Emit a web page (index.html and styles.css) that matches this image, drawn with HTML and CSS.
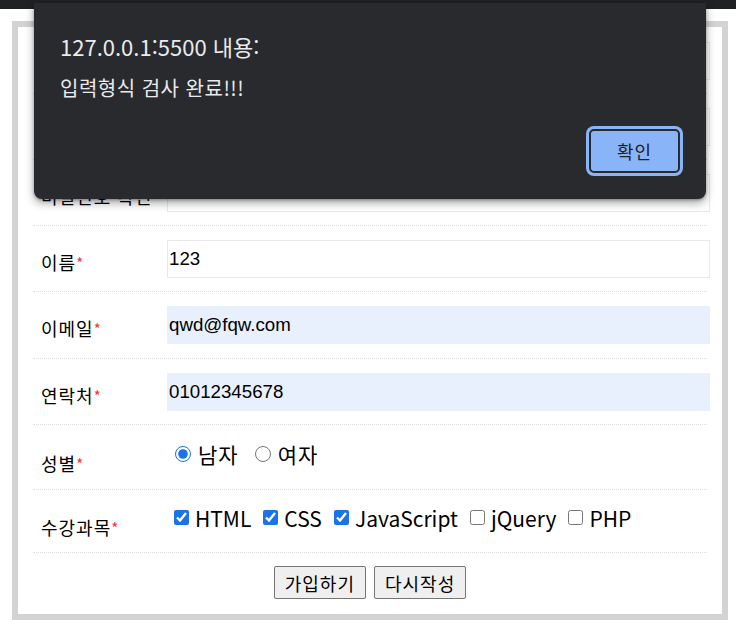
FILE: index.html
```html
<!DOCTYPE html>
<html lang="ko">
<head>
<meta charset="utf-8">
<title>회원가입</title>
<link rel="stylesheet" href="styles.css">
</head>
<body>
<div class="chrome"></div>
<div class="page">
  <form class="box">
    <div class="row field">
      <div class="lbl">아이디<span class="req">*</span></div>
      <input class="inp" type="text" value="">
    </div>
    <div class="row field">
      <div class="lbl">비밀번호<span class="req">*</span></div>
      <input class="inp" type="password" value="">
    </div>
    <div class="row field">
      <div class="lbl">비밀번호 확인</div>
      <input class="inp" type="password" value="">
    </div>
    <div class="row field">
      <div class="lbl">이름<span class="req">*</span></div>
      <input class="inp" type="text" value="123">
    </div>
    <div class="row field">
      <div class="lbl">이메일<span class="req">*</span></div>
      <input class="inp auto" type="text" value="qwd@fqw.com">
    </div>
    <div class="row field">
      <div class="lbl">연락처<span class="req">*</span></div>
      <input class="inp auto" type="text" value="01012345678">
    </div>
    <div class="row radios">
      <div class="lbl">성별<span class="req">*</span></div>
      <div class="opts">
        <label class="opt"><input type="radio" name="g" checked>남자</label>
        <label class="opt"><input type="radio" name="g">여자</label>
      </div>
    </div>
    <div class="row checks">
      <div class="lbl">수강과목<span class="req">*</span></div>
      <div class="opts">
        <label class="opt"><input type="checkbox" checked>HTML</label>
        <label class="opt"><input type="checkbox" checked>CSS</label>
        <label class="opt"><input type="checkbox" checked>JavaScript</label>
        <label class="opt"><input type="checkbox">jQuery</label>
        <label class="opt"><input type="checkbox">PHP</label>
      </div>
    </div>
    <div class="actions">
      <button type="button" class="btn">가입하기</button>
      <button type="button" class="btn">다시작성</button>
    </div>
  </form>
</div>

<div class="dialog">
  <div class="dlg-title">127.0.0.1:5500 내용:</div>
  <div class="dlg-msg">입력형식 검사 완료!!!</div>
  <div class="dlg-foot">
    <button type="button" class="dlg-btn">확인</button>
  </div>
</div>
</body>
</html>
```

FILE: styles.css
```css
* { box-sizing: border-box; }

html, body {
  margin: 0;
  padding: 0;
  background: #ffffff;
  font-family: "Noto Sans CJK KR", "Noto Sans", sans-serif;
  color: #000;
}

.chrome {
  height: 9px;
  background: #202124;
}

.page {
  padding: 12px 0 0 12px;
}

.box {
  width: 716px;
  border: 6px solid #d3d3d3;
  padding: 1px 15px 0 15px;
  margin: 0;
  background: #fff;
}

.row {
  display: flex;
  align-items: center;
  border-bottom: 1px dotted #dcdcdc;
}

.field { height: 66px; }
.field:nth-child(5) { height: 67px; }
.radios { height: 65px; }
.checks { height: 63px; }

.lbl {
  width: 134px;
  flex-shrink: 0;
  padding-left: 8px;
  padding-top: 7px;
  font-size: 18px;
  letter-spacing: 1px;
  line-height: 24px;
  white-space: nowrap;
}

.radios .lbl, .checks .lbl { padding-top: 13px; }

.req {
  color: #ff3030;
  font-size: 15px;
  letter-spacing: 0;
  vertical-align: 1px;
}

.inp {
  flex-shrink: 0;
  width: 543px;
  height: 38px;
  margin: 0;
  padding: 0 1px;
  border: 1px solid #e9e9e9;
  background: #fff;
  font-family: "Liberation Sans", Arial, sans-serif;
  font-size: 18.7px;
  color: #000;
  outline: none;
}

.inp.auto {
  background: #e8f0fe;
  border-color: #e8f0fe;
}

.opts {
  display: flex;
  align-items: center;
  padding-left: 7px;
  padding-bottom: 7px;
  font-size: 21px;
  line-height: 28px;
}

.opt {
  display: inline-flex;
  align-items: center;
  margin-right: 12px;
  white-space: nowrap;
}

.radios .opt { margin-right: 15px; letter-spacing: 1px; }

.opt input[type="radio"] {
  width: 16px;
  height: 16px;
  margin: 0 7px 0 1px;
  accent-color: #1a73e8;
}

.opt input[type="checkbox"] {
  width: 15px;
  height: 15px;
  margin: 0 6px 0 0;
  accent-color: #1a73e8;
}

.actions {
  display: flex;
  justify-content: center;
  gap: 8px;
  padding: 13px 0 15px;
}

.btn {
  height: 33px;
  padding: 0 10px;
  border: 1px solid #767676;
  border-radius: 2px;
  background: #efefef;
  font-family: "Noto Sans CJK KR", "Noto Sans", sans-serif;
  font-size: 18px;
  letter-spacing: 1px;
  color: #000;
  line-height: 1;
}

.dialog {
  position: absolute;
  left: 34px;
  top: 3px;
  width: 672px;
  height: 196px;
  background: #292a2d;
  border-radius: 0 0 8px 8px;
  box-shadow: 0 4px 10px rgba(0, 0, 0, 0.35), 0 1px 3px rgba(0, 0, 0, 0.3);
  padding: 28px 26px 26px 26px;
  color: #e8eaed;
}

.dlg-title {
  font-size: 22px;
  line-height: 30px;
}

.dlg-msg {
  margin-top: 14px;
  font-size: 20px;
  letter-spacing: 0.5px;
  line-height: 26px;
}

.dlg-foot {
  display: flex;
  justify-content: flex-end;
  margin-top: 28px;
}

.dlg-btn {
  width: 91px;
  height: 44px;
  border: 2px solid #292a2d;
  border-radius: 5px;
  background: #8ab4f8;
  box-shadow: 0 0 0 3px #8ab4f8;
  font-family: "Noto Sans CJK KR", "Noto Sans", sans-serif;
  font-size: 18px;
  letter-spacing: 1px;
  color: #202124;
  padding: 0;
}
```
